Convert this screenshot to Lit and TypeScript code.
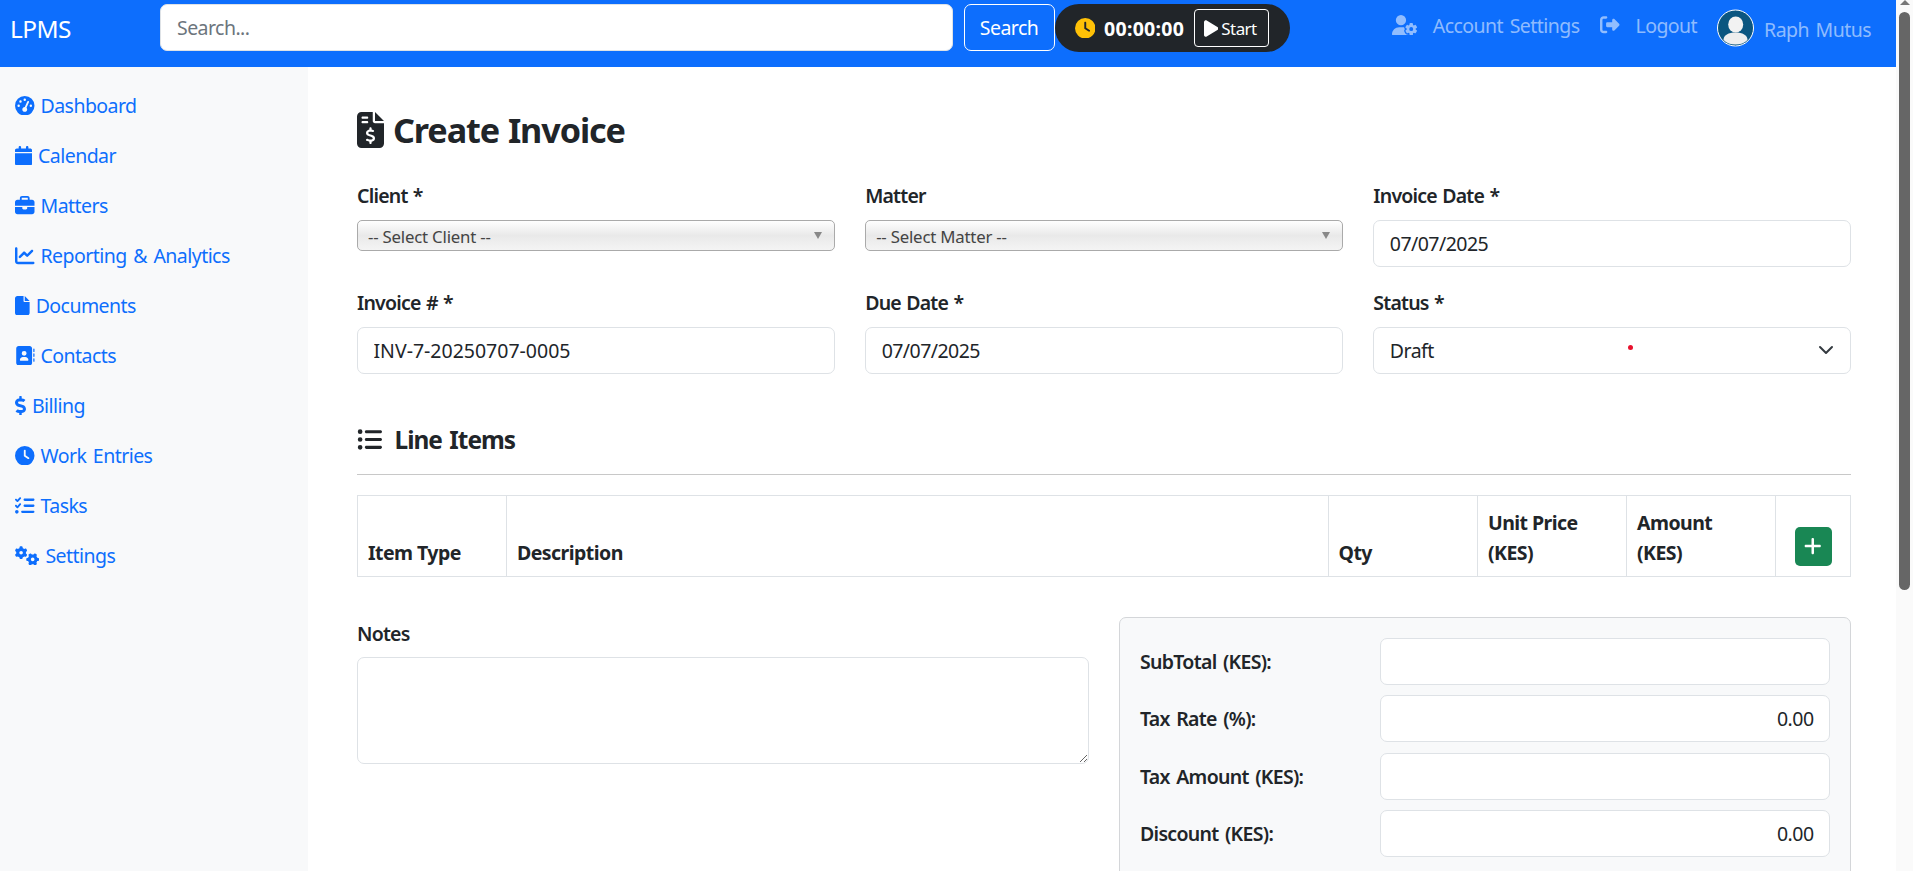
import { LitElement, html, css, svg } from "lit";
import { customElement } from "lit/decorators.js";

const I: Record<string, [number, string]> = {
  gauge: [512, "M0 256a256 256 0 1 1 512 0A256 256 0 1 1 0 256zM288 96a32 32 0 1 0 -64 0 32 32 0 1 0 64 0zM256 416c35.3 0 64-28.7 64-64c0-17.4-6.9-33.1-18.1-44.6L366 161.7c5.3-12.1-.2-26.3-12.3-31.6s-26.3 .2-31.6 12.3L257.9 288c-.6 0-1.3 0-1.9 0c-35.3 0-64 28.7-64 64s28.7 64 64 64zM176 144a32 32 0 1 0 -64 0 32 32 0 1 0 64 0zM96 288a32 32 0 1 0 0-64 32 32 0 1 0 0 64zm352-32a32 32 0 1 0 -64 0 32 32 0 1 0 64 0z"],
  calendar: [448, "M96 32V64H48C21.5 64 0 85.5 0 112v48H448V112c0-26.5-21.5-48-48-48H352V32c0-17.7-14.3-32-32-32s-32 14.3-32 32V64H160V32c0-17.7-14.3-32-32-32S96 14.3 96 32zM448 192H0V464c0 26.5 21.5 48 48 48H400c26.5 0 48-21.5 48-48V192z"],
  briefcase: [512, "M184 48H328c4.4 0 8 3.6 8 8V96H176V56c0-4.4 3.6-8 8-8zm-56 8V96H64C28.7 96 0 124.7 0 160v96H192 320 512V160c0-35.3-28.7-64-64-64H384V56c0-30.9-25.1-56-56-56H184c-30.9 0-56 25.1-56 56zM512 288H320v32c0 17.7-14.3 32-32 32H224c-17.7 0-32-14.3-32-32V288H0V416c0 35.3 28.7 64 64 64H448c35.3 0 64-28.7 64-64V288z"],
  chart: [512, "M64 64c0-17.7-14.3-32-32-32S0 46.3 0 64V400c0 44.2 35.8 80 80 80H480c17.7 0 32-14.3 32-32s-14.3-32-32-32H80c-8.8 0-16-7.2-16-16V64zm406.6 86.6c12.5-12.5 12.5-32.8 0-45.3s-32.8-12.5-45.3 0L320 210.7l-57.4-57.4c-12.5-12.5-32.8-12.5-45.3 0l-112 112c-12.5 12.5-12.5 32.8 0 45.3s32.8 12.5 45.3 0L240 221.3l57.4 57.4c12.5 12.5 32.8 12.5 45.3 0l128-128z"],
  file: [384, "M0 64C0 28.7 28.7 0 64 0H224V128c0 17.7 14.3 32 32 32H384V448c0 35.3-28.7 64-64 64H64c-35.3 0-64-28.7-64-64V64zm384 64H256V0L384 128z"],
  book: [512, "M96 0C60.7 0 32 28.7 32 64V448c0 35.3 28.7 64 64 64H384c35.3 0 64-28.7 64-64V64c0-35.3-28.7-64-64-64H96zM208 288h64c44.2 0 80 35.8 80 80c0 8.8-7.2 16-16 16H144c-8.8 0-16-7.2-16-16c0-44.2 35.8-80 80-80zm-32-96a64 64 0 1 1 128 0 64 64 0 1 1 -128 0zM512 80c0-8.8-7.2-16-16-16s-16 7.2-16 16v64c0 8.8 7.2 16 16 16s16-7.2 16-16V80zM496 192c-8.8 0-16 7.2-16 16v64c0 8.8 7.2 16 16 16s16-7.2 16-16V208c0-8.8-7.2-16-16-16zm16 144c0-8.8-7.2-16-16-16s-16 7.2-16 16v64c0 8.8 7.2 16 16 16s16-7.2 16-16V336z"],
  dollar: [288, "M209.2 233.4l-108-31.6C88.7 198.2 80 186.5 80 173.5c0-16.3 13.2-29.5 29.5-29.5h66.3c12.2 0 24.2 3.7 34.2 10.5 6.1 4.1 14.3 3.1 19.5-2l34.8-34c7.1-6.9 6.1-18.4-1.8-24.5C238 74.8 207.4 64.1 176 64V16c0-8.8-7.2-16-16-16h-32c-8.8 0-16 7.2-16 16v48h-2.5C45.8 64-5.4 118.7.5 183.6c4.2 46.1 39.4 83.6 83.8 96.6l102.5 30c12.5 3.7 21.2 15.3 21.2 28.3 0 16.3-13.2 29.5-29.5 29.5h-66.3C100 368 88 364.3 78 357.5c-6.1-4.1-14.3-3.1-19.5 2l-34.8 34c-7.1 6.9-6.1 18.4 1.8 24.5 24.5 19.2 55.1 29.9 86.5 30v48c0 8.8 7.2 16 16 16h32c8.8 0 16-7.2 16-16v-48.2c46.6-.9 90.3-28.6 105.7-72.7 21.5-61.6-14.6-124.8-72.5-141.7z"],
  clock: [512, "M256 0a256 256 0 1 1 0 512A256 256 0 1 1 256 0zM232 120V256c0 8 4 15.5 10.7 20l96 64c11 7.4 25.9 4.4 33.3-6.7s4.4-25.9-6.7-33.3L280 243.2V120c0-13.3-10.7-24-24-24s-24 10.7-24 24z"],
  tasks: [512, "M152.1 38.2c9.9 8.9 10.7 24 1.8 33.9l-72 80c-4.4 4.9-10.6 7.8-17.2 7.9s-12.9-2.4-17.6-7L7 113C-2.3 103.6-2.3 88.4 7 79s24.6-9.4 33.9 0l22.1 22.1 55.1-61.2c8.9-9.9 24-10.7 33.9-1.8zm0 160c9.9 8.9 10.7 24 1.8 33.9l-72 80c-4.4 4.9-10.6 7.8-17.2 7.9s-12.9-2.4-17.6-7L7 273c-9.4-9.4-9.4-24.6 0-33.9s24.6-9.4 33.9 0l22.1 22.1 55.1-61.2c8.9-9.9 24-10.7 33.9-1.8zM224 96c0-17.7 14.3-32 32-32H480c17.7 0 32 14.3 32 32s-14.3 32-32 32H256c-17.7 0-32-14.3-32-32zm0 160c0-17.7 14.3-32 32-32H480c17.7 0 32 14.3 32 32s-14.3 32-32 32H256c-17.7 0-32-14.3-32-32zM160 416c0-17.7 14.3-32 32-32H480c17.7 0 32 14.3 32 32s-14.3 32-32 32H192c-17.7 0-32-14.3-32-32zM48 368a48 48 0 1 1 0 96 48 48 0 1 1 0-96z"],
  gears: [640, "M308.5 135.3c7.1-6.3 9.9-16.2 6.2-25c-2.3-5.3-4.8-10.5-7.6-15.5L304 89.4c-3-5-6.3-9.9-9.8-14.6c-5.7-7.6-15.7-10.1-24.7-7.1l-28.2 9.3c-10.7-8.8-23-16-36.2-20.9L199 27.1c-1.9-9.3-9.1-16.7-18.5-17.8C173.9 8.4 167.2 8 160.4 8h-.7c-6.8 0-13.5 .4-20.1 1.2c-9.4 1.1-16.6 8.6-18.5 17.8L115 56.1c-13.3 5-25.5 12.1-36.2 20.9L50.5 67.8c-9-3-19-.5-24.7 7.1c-3.5 4.7-6.8 9.6-9.9 14.6l-3 5.3c-2.8 5-5.3 10.2-7.6 15.6c-3.7 8.7-.9 18.6 6.2 25l22.2 19.8C32.6 161.9 32 168.9 32 176s.6 14.1 1.7 20.9L11.5 216.7c-7.1 6.3-9.9 16.2-6.2 25c2.3 5.3 4.8 10.5 7.6 15.6l3 5.2c3 5.1 6.3 9.9 9.9 14.6c5.7 7.6 15.7 10.1 24.7 7.1l28.2-9.3c10.7 8.8 23 16 36.2 20.9l6.1 29.1c1.9 9.3 9.1 16.7 18.5 17.8c6.7 .8 13.5 1.2 20.4 1.2s13.7-.4 20.4-1.2c9.4-1.1 16.6-8.6 18.5-17.8l6.1-29.1c13.3-5 25.5-12.1 36.2-20.9l28.2 9.3c9 3 19 .5 24.7-7.1c3.5-4.7 6.8-9.5 9.8-14.6l3.1-5.4c2.8-5 5.3-10.2 7.6-15.5c3.7-8.7 .9-18.6-6.2-25l-22.2-19.8c1.1-6.8 1.7-13.8 1.7-20.9s-.6-14.1-1.7-20.9l22.2-19.8zM112 176a48 48 0 1 1 96 0 48 48 0 1 1 -96 0zM504.7 500.5c6.3 7.1 16.2 9.9 25 6.2c5.3-2.3 10.5-4.8 15.5-7.6l5.4-3.1c5-3 9.9-6.3 14.6-9.8c7.6-5.7 10.1-15.7 7.1-24.7l-9.3-28.2c8.8-10.7 16-23 20.9-36.2l29.1-6.1c9.3-1.9 16.7-9.1 17.8-18.5c.8-6.7 1.2-13.5 1.2-20.4s-.4-13.7-1.2-20.4c-1.1-9.4-8.6-16.6-17.8-18.5L583.9 307c-5-13.3-12.1-25.5-20.9-36.2l9.3-28.2c3-9 .5-19-7.1-24.7c-4.7-3.5-9.6-6.8-14.6-9.9l-5.3-3c-5-2.8-10.2-5.3-15.6-7.6c-8.7-3.7-18.6-.9-25 6.2l-19.8 22.2c-6.8-1.1-13.8-1.7-20.9-1.7s-14.1 .6-20.9 1.7l-19.8-22.2c-6.3-7.1-16.2-9.9-25-6.2c-5.3 2.3-10.5 4.8-15.6 7.6l-5.2 3c-5.1 3-9.9 6.3-14.6 9.9c-7.6 5.7-10.1 15.7-7.1 24.7l9.3 28.2c-8.8 10.7-16 23-20.9 36.2L315.1 313c-9.3 1.9-16.7 9.1-17.8 18.5c-.8 6.7-1.2 13.5-1.2 20.4s.4 13.7 1.2 20.4c1.1 9.4 8.6 16.6 17.8 18.5l29.1 6.1c5 13.3 12.1 25.5 20.9 36.2l-9.3 28.2c-3 9-.5 19 7.1 24.7c4.7 3.5 9.5 6.8 14.6 9.8l5.4 3.1c5 2.8 10.2 5.3 15.5 7.6c8.7 3.7 18.6 .9 25-6.2l19.8-22.2c6.8 1.1 13.8 1.7 20.9 1.7s14.1-.6 20.9-1.7l19.8 22.2zM464 304a48 48 0 1 1 0 96 48 48 0 1 1 0-96z"],
  invoice: [384, "M64 0C28.7 0 0 28.7 0 64V448c0 35.3 28.7 64 64 64H320c35.3 0 64-28.7 64-64V160H256c-17.7 0-32-14.3-32-32V0H64zM256 0V128H384L256 0zM64 80c0-8.8 7.2-16 16-16h64c8.8 0 16 7.2 16 16s-7.2 16-16 16H80c-8.8 0-16-7.2-16-16zm0 64c0-8.8 7.2-16 16-16h64c8.8 0 16 7.2 16 16s-7.2 16-16 16H80c-8.8 0-16-7.2-16-16zm128 72c8.8 0 16 7.2 16 16v17.3c8.5 1.2 16.7 3.1 24.1 5.1c8.5 2.3 13.6 11 11.3 19.6s-11 13.6-19.6 11.3c-11.1-3-22-5.2-32.1-5.3c-8.4-.1-17.4 1.8-23.6 5.5c-5.7 3.4-8.1 7.3-8.1 12.8c0 3.7 1.3 6.5 7.3 10.1c6.9 4.1 16.6 7.1 29.2 10.9l.5 .1 0 0 0 0c11.3 3.4 25.3 7.6 36.3 14.6c12.1 7.6 22.4 19.7 22.7 38.2c.3 19.3-9.6 33.3-22.9 41.6c-7.7 4.8-16.4 7.6-25.1 9.1V440c0 8.8-7.2 16-16 16s-16-7.2-16-16V422.2c-11.2-2.1-21.7-5.7-30.9-8.9l0 0 0 0c-2.1-.7-4.2-1.4-6.2-2.1c-8.4-2.8-12.9-11.9-10.1-20.2s11.9-12.9 20.2-10.1c2.5 .8 4.8 1.6 7.1 2.4l0 0 0 0 0 0c13.6 4.6 24.6 8.4 36.3 8.7c9.1 .3 17.9-1.7 23.7-5.3c5.1-3.2 7.9-7.3 7.8-14c-.1-4.6-1.8-7.8-7.7-11.6c-6.8-4.3-16.5-7.4-29-11.2l-1.6-.5 0 0c-11-3.3-24.3-7.3-34.8-13.7c-12-7.2-22.6-18.9-22.7-37.3c-.1-19.4 10.8-32.8 23.8-40.5c7.5-4.4 15.8-7.2 24.1-8.7V232c0-8.8 7.2-16 16-16z"],
  list: [512, "M64 144a48 48 0 1 0 0-96 48 48 0 1 0 0 96zM192 64c-17.7 0-32 14.3-32 32s14.3 32 32 32H480c17.7 0 32-14.3 32-32s-14.3-32-32-32H192zm0 160c-17.7 0-32 14.3-32 32s14.3 32 32 32H480c17.7 0 32-14.3 32-32s-14.3-32-32-32H192zm0 160c-17.7 0-32 14.3-32 32s14.3 32 32 32H480c17.7 0 32-14.3 32-32s-14.3-32-32-32H192zM64 464a48 48 0 1 0 0-96 48 48 0 1 0 0 96zm48-208a48 48 0 1 0 -96 0 48 48 0 1 0 96 0z"],
  usergear: [640, "M224 0a128 128 0 1 1 0 256A128 128 0 1 1 224 0zM178.3 304h91.4c11.8 0 23.4 1.2 34.5 3.3c-2.1 18.5 7.4 35.6 21.8 44.8c-16.6 10.6-26.7 31.6-20 53.3c4 12.9 9.4 25.5 16.4 37.6s15.2 23.1 24.4 33c15.7 16.9 39.6 18.4 57.2 8.7v.9c0 9.2 2.7 18.5 7.9 26.3H29.7C13.3 512 0 498.7 0 482.3C0 383.8 79.8 304 178.3 304zM436 218.2c0-7 4.5-13.3 11.3-14.8c10.5-2.4 21.5-3.7 32.7-3.7s22.2 1.3 32.7 3.7c6.8 1.5 11.3 7.8 11.3 14.8v30.6c7.9 3.4 15.4 7.7 22.3 12.8l24.9-14.3c6.1-3.5 13.7-2.7 18.5 2.4c7.6 8.1 14.3 17.2 20.1 27.2s10.3 20.4 13.5 31c2.1 6.7-1.1 13.7-7.2 17.2l-25 14.4c.4 4 .7 8.1 .7 12.3s-.2 8.2-.7 12.3l25 14.4c6.1 3.5 9.2 10.5 7.2 17.2c-3.3 10.6-7.8 21-13.5 31s-12.5 19.1-20.1 27.2c-4.8 5.1-12.5 5.9-18.5 2.4l-24.9-14.3c-6.9 5.1-14.3 9.4-22.3 12.8l0 30.6c0 7-4.5 13.3-11.3 14.8c-10.5 2.4-21.5 3.7-32.7 3.7s-22.2-1.3-32.7-3.7c-6.8-1.5-11.3-7.8-11.3-14.8V454.8c-8-3.4-15.6-7.7-22.5-12.9l-24.7 14.3c-6.1 3.5-13.7 2.7-18.5-2.4c-7.6-8.1-14.3-17.2-20.1-27.2s-10.3-20.4-13.5-31c-2.1-6.7 1.1-13.7 7.2-17.2l24.8-14.3c-.4-4.1-.7-8.2-.7-12.4s.2-8.3 .7-12.4L343.8 325c-6.1-3.5-9.2-10.5-7.2-17.2c3.3-10.6 7.7-21 13.5-31s12.5-19.1 20.1-27.2c4.8-5.1 12.4-5.9 18.5-2.4l24.8 14.3c6.9-5.1 14.5-9.4 22.5-12.9V218.2zm92.1 133.5a48.1 48.1 0 1 0 -96.1 0 48.1 48.1 0 1 0 96.1 0z"],
  logout: [512, "M377.9 105.9L500.7 228.7c7.2 7.2 11.3 17.1 11.3 27.3s-4.1 20.1-11.3 27.3L377.9 406.1c-6.4 6.4-15 9.9-24 9.9c-18.7 0-33.9-15.2-33.9-33.9l0-62.1-128 0c-17.7 0-32-14.3-32-32l0-64c0-17.7 14.3-32 32-32l128 0 0-62.1c0-18.7 15.2-33.9 33.9-33.9c9 0 17.6 3.6 24 9.9zM160 96L96 96c-17.7 0-32 14.3-32 32l0 256c0 17.7 14.3 32 32 32l64 0c17.7 0 32 14.3 32 32s-14.3 32-32 32l-64 0c-53 0-96-43-96-96L0 128C0 75 43 32 96 32l64 0c17.7 0 32 14.3 32 32s-14.3 32-32 32z"],
  play: [384, "M73 39c-14.8-9.1-33.4-9.4-48.5-.9S0 62.6 0 80V432c0 17.4 9.4 33.4 24.5 41.9s33.7 8.1 48.5-.9L361 297c14.3-8.7 23-24.2 23-41s-8.7-32.2-23-41L73 39z"],
  plus: [448, "M256 80c0-17.7-14.3-32-32-32s-32 14.3-32 32V224H48c-17.7 0-32 14.3-32 32s14.3 32 32 32H192V432c0 17.7 14.3 32 32 32s32-14.3 32-32V288H400c17.7 0 32-14.3 32-32s-14.3-32-32-32H256V80z"],
};

const icon = (name: string, size = 19.5) => {
  const [w, d] = I[name];
  return html`<svg class="ic" viewBox="0 0 ${w} 512" width=${(size * w) / 512} height=${size} fill="currentColor" aria-hidden="true">${svg`<path d=${d}></path>`}</svg>`;
};

const NAV: [string, string][] = [
  ["gauge", "Dashboard"],
  ["calendar", "Calendar"],
  ["briefcase", "Matters"],
  ["chart", "Reporting & Analytics"],
  ["file", "Documents"],
  ["book", "Contacts"],
  ["dollar", "Billing"],
  ["clock", "Work Entries"],
  ["tasks", "Tasks"],
  ["gears", "Settings"],
];

@customElement("app-root")
export class AppRoot extends LitElement {
  static styles = css`
    :host {
      display: flex;
      height: 100vh;
      overflow: hidden;
      background: #fff;
      color: #212529;
      font-family: "Noto Sans", "Open Sans", sans-serif;
      font-size: 19.5px;
      line-height: 29px;
      letter-spacing: -0.028em;
      word-spacing: 2px;
    }
    * { box-sizing: border-box; }
    .ic { flex: none; display: block; }
    .page { flex: 1; min-width: 0; display: flex; flex-direction: column; }

    .scrollbar { flex: none; width: 17px; background: #fafafa; display: flex; flex-direction: column; align-items: center; }
    .scroll-up { width: 0; height: 0; border-left: 5px solid transparent; border-right: 5px solid transparent; border-bottom: 5px solid #777; }
    .scroll-thumb { width: 11px; height: 578px; margin-top: 7px; border-radius: 6px; background: #666; }

    .navbar { flex: none; height: 67px; background: #0d6efd; padding: 4px 25px 0 10px; display: flex; align-items: flex-start; }
    .brand { width: 150px; margin-top: 7px; font-size: 24.4px; line-height: 36px; color: #fff; }
    .search { width: 793px; height: 47px; border: 1px solid #dee2e6; border-radius: 7px; padding: 0 16px; font: inherit; letter-spacing: inherit; color: #212529; background: #fff; outline: none; }
    .search::placeholder { color: #6c757d; opacity: 1; }
    .btn-search { width: 91px; height: 47px; margin-left: 10.5px; border: 1px solid #fff; border-radius: 7px; background: transparent; color: #fff; font: inherit; letter-spacing: inherit; padding: 0; }
    .timer { width: 235px; height: 48px; border-radius: 24px; background: #212529; color: #fff; display: flex; align-items: center; padding-left: 20px; }
    .timer .clk { color: #ffc107; }
    .time { margin-left: 9px; width: 90px; font-weight: 700; letter-spacing: 0.015em; }
    .start { height: 38px; width: 75px; border: 1px solid #fff; border-radius: 4px; background: transparent; color: #fff; font: inherit; font-size: 17px; letter-spacing: inherit; padding: 0 0 0 9px; display: flex; align-items: center; gap: 3px; }
    .right { margin-left: auto; display: flex; align-items: flex-start; color: rgba(255, 255, 255, 0.55); }
    .link { display: flex; align-items: center; gap: 15.5px; height: 42px; color: inherit; text-decoration: none; }
    .link + .link { margin-left: 21px; }
    .user { display: flex; align-items: center; margin-left: 20px; margin-top: 5px; gap: 10px; }
    .user span { position: relative; top: 1px; }
    .avatar { display: block; flex: none; }

    .body { flex: 1; min-height: 0; display: flex; }
    .side { flex: none; width: 308px; background: #f8f9fa; padding: 13.5px 0 0 15px; display: flex; flex-direction: column; }
    .side a { height: 50px; display: flex; align-items: center; gap: 6px; color: #0d6efd; text-decoration: none; }

    .main { flex: 1; min-width: 0; padding: 39px 45px 0 49px; }
    h2 { margin: 0 0 28px; display: flex; align-items: center; gap: 9px; font-size: 34.2px; line-height: 47px; font-weight: 700; letter-spacing: -0.032em; word-spacing: 1px; }
    .grid { display: grid; grid-template-columns: repeat(3, 1fr); column-gap: 30.5px; row-gap: 21.5px; }
    label { display: block; font-weight: 600; margin-bottom: 9.5px; letter-spacing: -0.04em; word-spacing: 1px; }
    .control { display: block; width: 100%; height: 47px; border: 1px solid #dee2e6; border-radius: 7px; padding: 0 15.5px; font: inherit; letter-spacing: inherit; word-spacing: inherit; color: #212529; background: #fff; outline: none; }
    .wide { letter-spacing: 0; }
    .select2 { height: 31px; margin-top: 5px; border: 1px solid #aaa; border-radius: 5px; background: linear-gradient(to bottom, #fff 0%, #e9e9e9 50%, #f4f4f4 100%); padding: 4px 10px 0; display: flex; justify-content: space-between; font-size: 16.8px; line-height: 24px; color: #444; letter-spacing: -0.012em; word-spacing: 0; }
    .tri { width: 0; height: 0; margin: 7px 2px 0 0; border-left: 4.5px solid transparent; border-right: 4.5px solid transparent; border-top: 7px solid #888; }
    .status { display: flex; align-items: center; justify-content: space-between; line-height: 45px; position: relative; }
    .dot { position: absolute; left: 253.5px; top: 17.5px; width: 5px; height: 5px; border-radius: 50%; background: #e8112d; }

    h5 { margin: 51px 0 19px; display: flex; align-items: center; gap: 12.5px; font-size: 24.4px; line-height: 30px; font-weight: 700; letter-spacing: -0.04em; }
    hr { margin: 0 0 20px; border: 0; height: 1px; background: #c8c8c8; }
    table { width: 100%; table-layout: fixed; border-collapse: collapse; }
    th { height: 81px; padding: 0 10px 8px; border: 1px solid #dee2e6; text-align: left; vertical-align: bottom; font-weight: 700; line-height: 30px; word-spacing: 0; }
    .add { width: 37px; height: 39px; margin: 0 auto 2px; border: 0; border-radius: 5px; background: #198754; color: #fff; padding: 0; display: flex; align-items: center; justify-content: center; }

    .bottom { margin-top: 40px; display: flex; gap: 30.5px; align-items: flex-start; }
    .notes { flex: none; width: 731.5px; padding-top: 2px; }
    textarea.control { height: 107px; padding: 8px 16px; resize: both; }
    .panel { flex: 1; min-width: 0; border: 1px solid #d4d6d9; border-radius: 7px; background: #f8f9fa; padding: 20px 20px 0; display: flex; flex-direction: column; gap: 10.6px; height: 280px; }
    .row { display: flex; align-items: center; }
    .row b { flex: none; width: 240px; font-weight: 600; letter-spacing: -0.035em; }
    .row input { flex: 1; min-width: 0; text-align: right; }
  `;

  render() {
    return html`
      <div class="page">
        <header class="navbar">
          <div class="brand">LPMS</div>
          <input class="search" type="text" placeholder="Search..." />
          <button class="btn-search">Search</button>
          <div class="timer">
            <span class="clk">${icon("clock", 20.5)}</span>
            <span class="time">00:00:00</span>
            <button class="start">${icon("play", 19)}Start</button>
          </div>
          <div class="right">
            <a class="link">${icon("usergear", 20.5)}Account Settings</a>
            <a class="link">${icon("logout", 19.5)}Logout</a>
            <div class="user">
              <svg class="avatar" width="37" height="38" viewBox="0 0 37 38">
                <circle cx="18.5" cy="19" r="18" fill="#0b5680" stroke="#fff" stroke-width="1"></circle>
                <ellipse cx="18.7" cy="15.5" rx="7.5" ry="8" fill="#f2f2f2"></ellipse>
                <path d="M6.5 31c0-5 5-7.500 12-7.500s12 2.500 12 7.500c-3 3-7 4.500-12 4.500s-9-1.500-12-4.500z" fill="#eeeeee"></path>
              </svg>
              <span>Raph Mutus</span>
            </div>
          </div>
        </header>
        <div class="body">
          <nav class="side">
            ${NAV.map(([ic, t]) => html`<a>${icon(ic)}<span>${t}</span></a>`)}
          </nav>
          <main class="main">
            <h2>${icon("invoice", 36)}Create Invoice</h2>
            <div class="grid">
              <div><label>Client *</label><div class="select2"><span>-- Select Client --</span><i class="tri"></i></div></div>
              <div><label>Matter</label><div class="select2"><span>-- Select Matter --</span><i class="tri"></i></div></div>
              <div><label>Invoice Date *</label><input class="control" value="07/07/2025" /></div>
              <div><label>Invoice # *</label><input class="control wide" value="INV-7-20250707-0005" /></div>
              <div><label>Due Date *</label><input class="control" value="07/07/2025" /></div>
              <div>
                <label>Status *</label>
                <div class="control status">
                  <span>Draft</span><i class="dot"></i>
                  <svg width="16" height="16" viewBox="0 0 16 16" fill="none" stroke="#343a40" stroke-width="2" stroke-linecap="round" stroke-linejoin="round"><path d="m2 5 6 6 6-6"></path></svg>
                </div>
              </div>
            </div>
            <h5>${icon("list", 25)}Line Items</h5>
            <hr />
            <table>
              <colgroup>
                <col style="width:149px" /><col /><col style="width:149.5px" /><col style="width:149px" /><col style="width:149px" /><col style="width:75px" />
              </colgroup>
              <thead>
                <tr>
                  <th>Item Type</th><th>Description</th><th>Qty</th><th>Unit Price<br />(KES)</th><th>Amount<br />(KES)</th>
                  <th><button class="add">${icon("plus", 20)}</button></th>
                </tr>
              </thead>
            </table>
            <div class="bottom">
              <div class="notes">
                <label>Notes</label>
                <textarea class="control"></textarea>
              </div>
              <div class="panel">
                <div class="row"><b>SubTotal (KES):</b><input class="control" /></div>
                <div class="row"><b>Tax Rate (%):</b><input class="control" value="0.00" /></div>
                <div class="row"><b>Tax Amount (KES):</b><input class="control" /></div>
                <div class="row"><b>Discount (KES):</b><input class="control" value="0.00" /></div>
              </div>
            </div>
          </main>
        </div>
      </div>
      <div class="scrollbar"><i class="scroll-up"></i><i class="scroll-thumb"></i></div>
    `;
  }
}
